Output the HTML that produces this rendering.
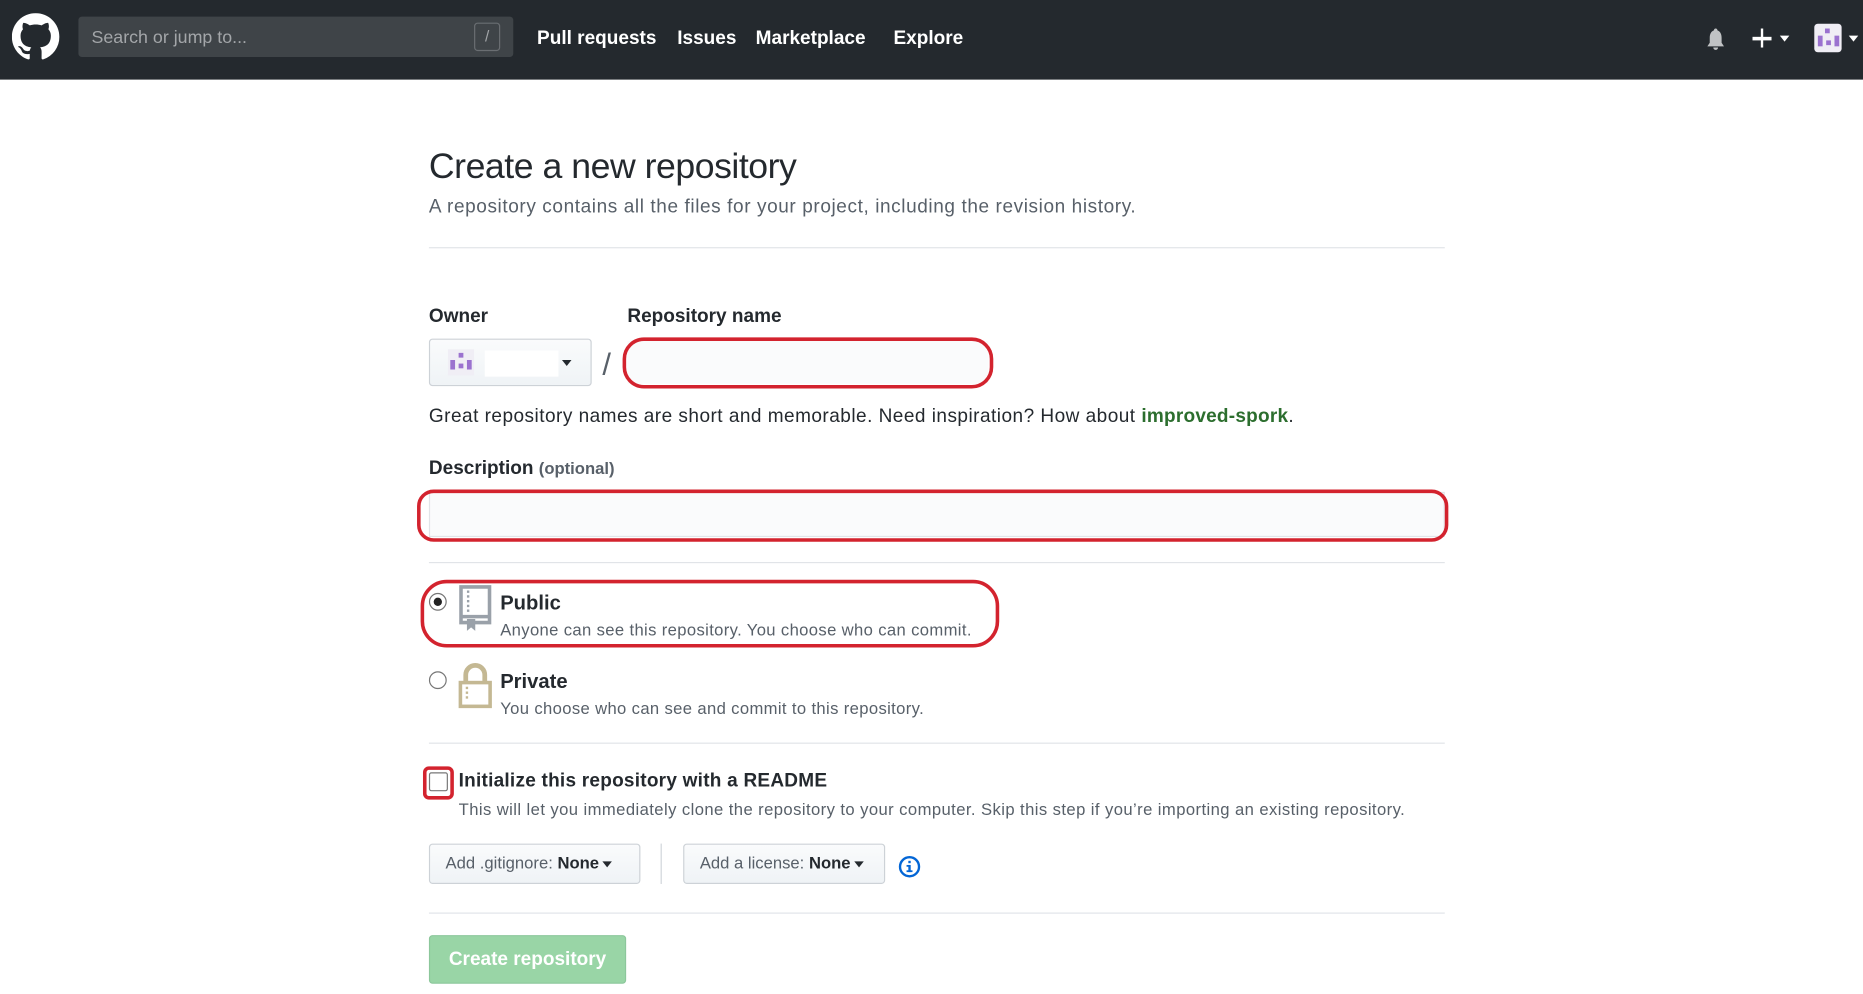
<!DOCTYPE html>
<html><head><meta charset="utf-8"><style>
*{margin:0;padding:0;box-sizing:border-box}
html,body{width:1863px;height:994px;overflow:hidden;background:#fff}
#w{position:absolute;left:0;top:0;width:1568px;height:837px;transform:scale(1.18814);transform-origin:0 0;font-family:"Liberation Sans",Arial,sans-serif;color:#24292e}
.a{position:absolute;white-space:nowrap}
.nav{left:0;top:0;width:1568px;height:67px;background:#24292e}
.nl{color:#fff;font-weight:bold;font-size:16px;top:24px}
.lbl{font-weight:bold;font-size:16px}
.hr{height:1px;background:#e1e4e8;left:361px;width:855px}
.red{border:3px solid #d3232e;border-radius:18px}
.btn{background:linear-gradient(#fafbfc,#eff3f6);border:1px solid #cdd2d7;border-radius:3px;font-size:14px;color:#586069;padding-left:13px;line-height:31px}
.car{display:inline-block;width:0;height:0;border-left:4px solid transparent;border-right:4px solid transparent;border-top:5px solid #24292e;vertical-align:middle;margin-left:3px}
.radio{width:15px;height:15px;border:1px solid #767676;border-radius:50%;background:#fff}
.g{color:#586069;font-size:14px;letter-spacing:.3px}
</style></head><body><div id="w">
<div class="a nav"></div>
<svg class="a" style="left:10px;top:11px" width="40" height="40" viewBox="0 0 16 16"><path fill="#fff" d="M8 0C3.580 0 0 3.58 0 8c0 3.54 2.29 6.53 5.47 7.590.4.07.55-.17.55-.38 0-.19-.01-.82-.01-1.49-2.010.37-2.53-.49-2.69-.94-.09-.23-.48-.94-.82-1.13-.28-.15-.68-.52-.01-.53.63-.01 1.08.58 1.23.82.72 1.21 1.87.87 2.33.66.07-.52.28-.87.51-1.07-1.78-.2-3.64-.89-3.64-3.95 0-.87.31-1.59.82-2.15-.08-.2-.36-1.020.08-2.12 0 0 .67-.21 2.2.82.64-.18 1.32-.27 2-.27.68 0 1.36.09 2 .27 1.53-1.04 2.2-.82 2.2-.82.44 1.1.16 1.92.08 2.12.51.56.82 1.27.82 2.15 0 3.07-1.87 3.75-3.65 3.95.29.25.54.73.54 1.48 0 1.07-.01 1.93-.01 2.2 0 .21.15.46.55.38A8.013 8.013 0 0016 8c0-4.42-3.58-8-8-8z"/></svg>
<div class="a" style="left:66px;top:14px;width:366px;height:34px;background:#3f4448;border-radius:3px"></div>
<div class="a" style="left:77px;top:23px;font-size:15px;color:#a3a6a9">Search or jump to...</div>
<div class="a" style="left:399px;top:19px;width:22px;height:24px;border:1px solid #6a6e72;border-radius:3px;color:#a3a6a9;font-size:13px;text-align:center;line-height:22px">/</div>
<div class="a nl" style="left:452px">Pull requests</div>
<div class="a nl" style="left:570px">Issues</div>
<div class="a nl" style="left:636px">Marketplace</div>
<div class="a nl" style="left:752px">Explore</div>
<svg class="a" style="left:1435px;top:23px" width="18" height="20" viewBox="0 0 18 20"><path fill="#c0c2c4" d="M9 1c1 0 1.5.8 1.5 1.6C13 3.4 14 6 14 9v4l2 3H2l2-3V9c0-3 1-5.6 3.5-6.4C7.5 1.8 8 1 9 1zM7 17h4c0 1.2-1 2-2 2s-2-.8-2-2z"/></svg>
<div class="a" style="left:1475px;top:31px;width:16px;height:2.5px;background:#fff"></div>
<div class="a" style="left:1481.7px;top:24px;width:2.5px;height:16px;background:#fff"></div>
<div class="a" style="left:1498px;top:30px;border-left:4px solid transparent;border-right:4px solid transparent;border-top:5px solid #fff"></div>
<div class="a" style="left:1527px;top:20px;width:23px;height:24px;background:#f0eef5;border-radius:3px"></div>
<div class="a" style="left:1536px;top:24px;width:4px;height:4px;background:#9b72cf"></div>
<div class="a" style="left:1530px;top:30px;width:4px;height:9px;background:#9b72cf"></div>
<div class="a" style="left:1537px;top:34px;width:4px;height:4px;background:#9b72cf"></div>
<div class="a" style="left:1544px;top:30px;width:4px;height:9px;background:#9b72cf"></div>
<div class="a" style="left:1556px;top:30px;border-left:4px solid transparent;border-right:4px solid transparent;border-top:5px solid #fff"></div>

<div class="a" style="left:361px;top:124px;font-size:30px;letter-spacing:-.4px">Create a new repository</div>
<div class="a" style="left:361px;top:166px;font-size:16px;color:#586069;letter-spacing:.5px">A repository contains all the files for your project, including the revision history.</div>
<div class="a hr" style="top:208px"></div>

<div class="a lbl" style="left:361px;top:258px">Owner</div>
<div class="a lbl" style="left:528px;top:258px">Repository name</div>
<div class="a btn" style="left:361px;top:285px;width:137px;height:40px"></div>
<div class="a" style="left:377px;top:294px;width:22px;height:22px;background:#f0eef5"></div>
<div class="a" style="left:386px;top:297px;width:4px;height:4px;background:#9b72cf"></div>
<div class="a" style="left:379px;top:303px;width:4px;height:8px;background:#9b72cf"></div>
<div class="a" style="left:386px;top:306px;width:4px;height:4px;background:#9b72cf"></div>
<div class="a" style="left:393px;top:303px;width:4px;height:8px;background:#9b72cf"></div>
<div class="a" style="left:408px;top:295px;width:62px;height:22px;background:#fff"></div>
<div class="a" style="left:473px;top:303px;border-left:4.5px solid transparent;border-right:4.5px solid transparent;border-top:5px solid #24292e"></div>
<div class="a" style="left:507px;top:291px;font-size:26px;color:#586069">/</div>
<div class="a" style="left:528px;top:287px;width:304px;height:36px;background:#fafbfc"></div>
<div class="a red" style="left:524px;top:284px;width:312px;height:43px"></div>
<div class="a" style="left:361px;top:342px;font-size:16px;letter-spacing:.4px">Great repository names are short and memorable. Need inspiration? How about <b style="color:#2c6e2e;letter-spacing:.2px">improved-spork</b>.</div>

<div class="a lbl" style="left:361px;top:386px">Description <span style="font-size:14px;color:#586069">(optional)</span></div>
<div class="a" style="left:361px;top:414px;width:855px;height:38px;background:#fafbfc;border:1px solid #e1e4e8"></div>
<div class="a red" style="left:351px;top:412px;width:868px;height:44px;border-radius:14px"></div>
<div class="a hr" style="top:473px"></div>

<div class="a radio" style="left:361px;top:499px"></div>
<div class="a" style="left:365px;top:503px;width:7px;height:7px;border-radius:50%;background:#222"></div>
<svg class="a" style="left:385px;top:492px" width="30" height="40" viewBox="0 0 30 40"><path fill="none" stroke="#9aa1a9" stroke-width="3" d="M3 2h24v30H3zM3 27h24"/><path fill="#9aa1a9" d="M8 5h2v2H8zM8 9h2v2H8zM8 13h2v2H8zM8 17h2v2H8zM8 21h2v2H8zM8 29h7v10l-3.5-3-3.5 3z"/></svg>
<div class="a lbl" style="left:421px;top:498px;font-size:17px">Public</div>
<div class="a g" style="left:421px;top:522px">Anyone can see this repository. You choose who can commit.</div>
<div class="a red" style="left:354px;top:488px;width:487px;height:57px;border-radius:22px"></div>

<div class="a radio" style="left:361px;top:565px"></div>
<svg class="a" style="left:385px;top:557px" width="30" height="40" viewBox="0 0 30 40"><path fill="none" stroke="#c4b893" stroke-width="4" d="M7 17v-6a8 8 0 0116 0v6"/><rect x="2.5" y="17.5" width="25" height="20" fill="none" stroke="#c4b893" stroke-width="3"/><path fill="#c4b893" d="M7 21h2v2H7zM7 25h2v2H7zM7 29h2v2H7z"/></svg>
<div class="a lbl" style="left:421px;top:564px;font-size:17px">Private</div>
<div class="a g" style="left:421px;top:588px">You choose who can see and commit to this repository.</div>
<div class="a hr" style="top:625px"></div>

<div class="a" style="left:361px;top:650px;width:16px;height:16px;border:1px solid #777;background:#fff;border-radius:2px"></div>
<div class="a" style="left:356px;top:645px;width:26px;height:28px;border:3px solid #d3232e;border-radius:5px"></div>
<div class="a lbl" style="left:386px;top:649px;font-size:16px;letter-spacing:.2px">Initialize this repository with a README</div>
<div class="a g" style="left:386px;top:673px;letter-spacing:.35px">This will let you immediately clone the repository to your computer. Skip this step if you’re importing an existing repository.</div>

<div class="a btn" style="left:361px;top:710px;width:178px;height:34px">Add .gitignore: <b style="color:#24292e">None</b><span class="car"></span></div>
<div class="a" style="left:556px;top:710px;width:1px;height:34px;background:#d1d5da"></div>
<div class="a btn" style="left:575px;top:710px;width:170px;height:34px">Add a license: <b style="color:#24292e">None</b><span class="car"></span></div>
<svg class="a" style="left:756px;top:720px" width="19" height="19" viewBox="0 0 19 19"><circle cx="9.5" cy="9.5" r="8" fill="none" stroke="#0366d6" stroke-width="2"/><rect x="8.5" y="8" width="2" height="6" fill="#0366d6"/><rect x="8.5" y="4.5" width="2" height="2" fill="#0366d6"/><rect x="7" y="8" width="3" height="1.5" fill="#0366d6"/><rect x="7" y="12.5" width="5" height="1.5" fill="#0366d6"/></svg>
<div class="a hr" style="top:768px"></div>
<div class="a" style="left:361px;top:787px;width:166px;height:41px;background:#94d3a2;border:1px solid #86c596;border-radius:3px;color:#fff;font-weight:bold;font-size:16px;text-align:center;line-height:40px;opacity:.95">Create repository</div>
</div></body></html>
